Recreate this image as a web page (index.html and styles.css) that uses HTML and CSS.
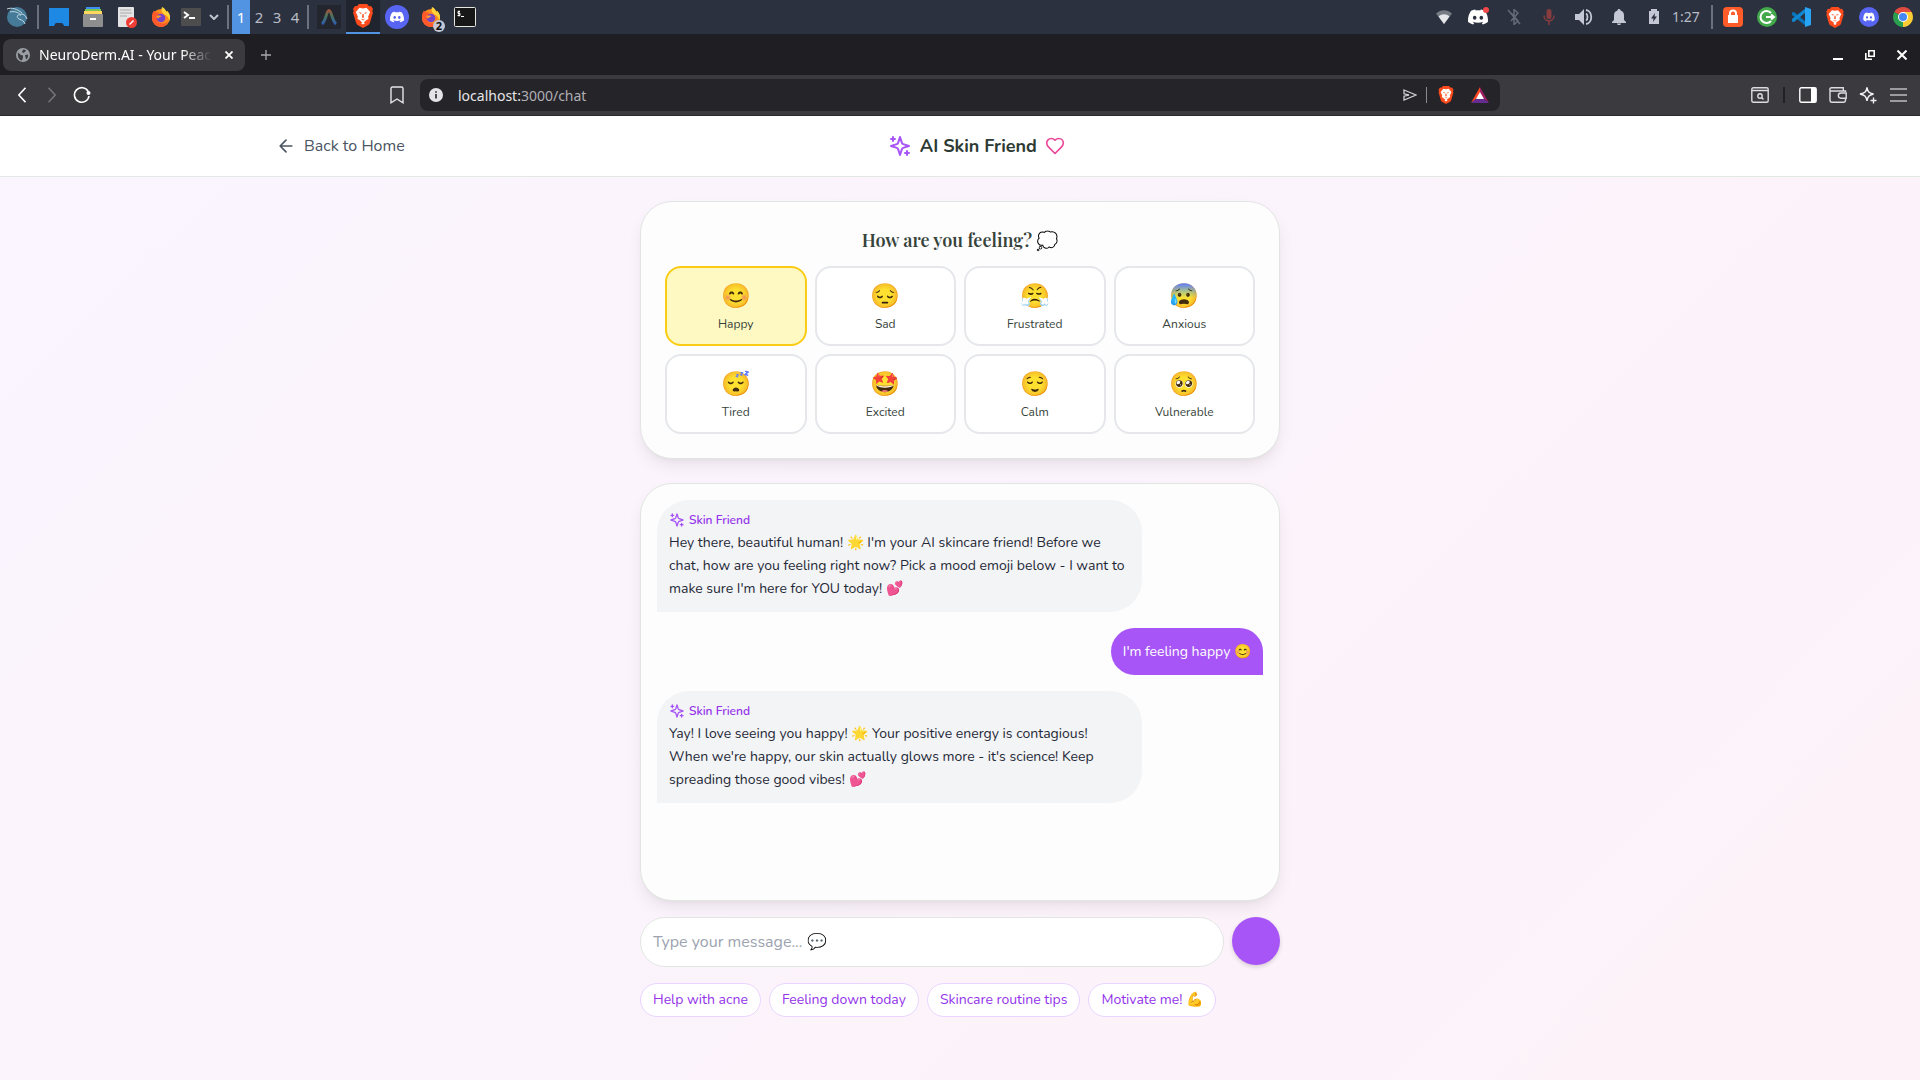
FILE: index.html
```
<!DOCTYPE html>
<html lang="en">
<head>
  <meta charset="UTF-8">
  <meta name="viewport" content="width=device-width, initial-scale=1.0">
  <title>NeuroDerm.AI</title>
  <link rel="stylesheet" href="styles.css">
</head>
<body>

  <!-- shared icons -->
  <svg class="sprite" aria-hidden="true">
    <symbol id="sparkles" viewBox="0 0 24 24">
      <path d="m12 3-1.912 5.813a2 2 0 0 1-1.275 1.275L3 12l5.813 1.912a2 2 0 0 1 1.275 1.275L12 21l1.912-5.813a2 2 0 0 1 1.275-1.275L21 12l-5.813-1.912a2 2 0 0 1-1.275-1.275L12 3Z M5 3v4 M19 17v4 M3 5h4 M17 19h4" fill="none" stroke="currentColor" stroke-width="2" stroke-linecap="round" stroke-linejoin="round"/>
    </symbol>
    <symbol id="discord" viewBox="0 0 24 24">
      <path fill="#fff" d="M20.317 4.37a19.79 19.79 0 0 0-4.885-1.515.074.074 0 0 0-.079.037c-.21.375-.444.865-.608 1.25-1.845-.277-3.68-.277-5.487 0-.164-.394-.406-.875-.618-1.25a.077.077 0 0 0-.078-.037A19.736 19.736 0 0 0 3.677 4.37a.07.07 0 0 0-.032.027C.533 9.046-.319 13.58.099 18.058a.082.082 0 0 0 .031.056c2.053 1.508 4.041 2.423 5.993 3.03a.078.078 0 0 0 .084-.028c.462-.63.873-1.295 1.226-1.994a.076.076 0 0 0-.042-.106 13 13 0 0 1-1.872-.892.077.077 0 0 1-.008-.128l.372-.291a.074.074 0 0 1 .078-.011c3.928 1.793 8.18 1.793 12.061 0a.074.074 0 0 1 .079.01c.12.099.246.198.373.292a.077.077 0 0 1-.007.128c-.6.35-1.22.645-1.873.891a.077.077 0 0 0-.041.107c.36.698.772 1.363 1.225 1.993a.076.076 0 0 0 .084.029c1.961-.607 3.95-1.522 6.002-3.03a.077.077 0 0 0 .032-.055c.5-5.177-.838-9.674-3.549-13.66a.061.061 0 0 0-.031-.029zM8.02 15.331c-1.183 0-2.157-1.086-2.157-2.419s.956-2.419 2.157-2.419c1.21 0 2.176 1.095 2.157 2.419 0 1.333-.956 2.419-2.157 2.419zm7.975 0c-1.183 0-2.157-1.086-2.157-2.419s.955-2.419 2.157-2.419c1.21 0 2.176 1.095 2.157 2.419 0 1.333-.946 2.419-2.157 2.419z"/>
    </symbol>
    <symbol id="discord-round" viewBox="0 0 24 24">
      <circle cx="12" cy="12" r="12" fill="#5865f2"/>
      <use href="#discord" x="5" y="5" width="14" height="14"/>
    </symbol>
    <symbol id="brave" viewBox="0 0 20 24">
      <path fill="#fb4a1b" d="M6 0h8l2.200 2.300L18 2l2 3-.7 1.900.6 1.900-2.900 9.700c-.4 1.300-1 2-2 2.700L10 24l-5-2.800c-1-.7-1.600-1.400-2-2.700L.1 8.800l.6-1.900L0 5l2-3 1.800.3z"/>
      <path fill="#fff" d="M6.500 3.800 10 4.400l3.500-.6 3.700 4.300-2.100 4.600.5 2.100-2.700 1.800-2.900 2.600-2.900-2.600-2.700-1.800.5-2.100-2.100-4.600z"/>
      <path fill="#fb4a1b" d="m5.500 8.200 3 .5-.5 1.300zM14.500 8.200l-3 .5.5 1.300zM9.400 10h1.200l.3 3.400-.9.700-.9-.7zM7.500 14.600l2.500 1 2.500-1L10 16.600z"/>
      <path fill="#fff" d="m8 19.200 2-1.200 2 1.200-2 1.400z"/>
    </symbol>
    <symbol id="firefox" viewBox="0 0 20 20">
      <circle cx="10" cy="11" r="9" fill="#ff8a1e"/>
      <path fill="#ff5a2c" d="M1.300 6.500 3 3.500l1.500 2 2.500-.3 2 3.500-3.300 3 2 4 5 .8 4.500-1.500C15.500 18.500 12.500 20 10 20c-5 0-9-4-9-9z"/>
      <path fill="#ffd43b" d="M11 0c3 1.300 4 3.500 4.200 5L16.500 4c2.500 2.700 3.300 6 1.900 10-.5-3-2.400-5.500-4.900-6.500C10.500 5.500 10 2.500 11 0z"/>
      <circle cx="10" cy="11" r="4.300" fill="#7542c9"/>
      <path fill="#ff9d27" d="M5 8.500c2 .6 3-.6 5.500.5-1 1.300-3 1-3.300 2.800-.8-.6-1.700-2-2.200-3.300z"/>
    </symbol>
  </svg>

  <!-- desktop panel -->
  <div class="panel">
    <div class="panel-group">
      <span class="slot"><svg width="24" height="24" viewBox="0 0 24 24"><circle cx="12" cy="12" r="10" fill="#457b98"/><path d="M2 4c5-2 10 0 15 4M5 7c4-1 8 0 11 3-4-1-5 2-2 4 3 1 5 2 6 5M16 9c3 0 5 2 6 5" fill="none" stroke="#c4dbe6" stroke-width="1"/></svg></span>
      <span class="sep"></span>
      <span class="slot"><svg width="20" height="18" viewBox="0 0 20 18"><path fill="#1e88e5" d="M0 0h20v18h-5l-2-3H7l-2 3H0z"/><path fill="#2a3140" d="m5 18 1.500-2.500h7L15 18z"/></svg></span>
      <span class="slot"><svg width="20" height="20" viewBox="0 0 20 20"><path fill="#3d8df5" d="M3 0h14v3H3z"/><path fill="#7ac74f" d="M2 2h16v3H2z"/><path fill="#ffd75e" d="M1 4h18v4H1z"/><rect y="7" width="20" height="13" rx="1" fill="#8e8e8e"/><rect x="7" y="11" width="6" height="2" fill="#fff"/></svg></span>
      <span class="slot"><svg width="20" height="21" viewBox="0 0 20 21"><rect x="1" width="16" height="20" rx="1" fill="#e4e4e4"/><path d="M3 3h11M3 6h12M3 9h7" stroke="#aaa"/><circle cx="14.500" cy="15.500" r="5.500" fill="#f03e36"/><path d="m12.500 17.500 4-4" stroke="#fff" stroke-width="1.500"/></svg></span>
      <span class="slot"><svg width="20" height="20"><use href="#firefox"/></svg></span>
      <span class="slot narrow"><svg width="20" height="18" viewBox="0 0 20 18"><rect width="20" height="18" rx="1" fill="#4d4d4d"/><path d="m3 4 4 3-4 3M8 10h6" fill="none" stroke="#fff" stroke-width="2"/></svg></span>
      <span class="slot chevron"><svg width="10" height="6" viewBox="0 0 10 6"><path d="m1 1 4 4 4-4" fill="none" stroke="#c0c4cc" stroke-width="2"/></svg></span>
      <span class="sep"></span>
      <button class="workspace current" type="button">1</button>
      <button class="workspace" type="button">2</button>
      <button class="workspace" type="button">3</button>
      <button class="workspace" type="button">4</button>
      <span class="sep"></span>
      <span class="slot"><svg width="24" height="24" viewBox="0 0 24 24"><defs><linearGradient id="arch" x2="0" y2="1"><stop offset="0" stop-color="#a0563f"/><stop offset=".4" stop-color="#4a7358"/><stop offset="1" stop-color="#2f5fb4"/></linearGradient></defs><rect width="24" height="24" fill="#23262f"/><path d="M5 19C9 16 9.500 5.500 12 5.500S15 16 19 19" fill="none" stroke="url(#arch)" stroke-width="3"/></svg></span>
      <span class="slot running"><svg width="20" height="24"><use href="#brave"/></svg></span>
      <span class="slot"><svg width="24" height="24"><use href="#discord-round"/></svg></span>
      <span class="slot badged"><svg width="20" height="20"><use href="#firefox"/></svg><b class="badge">2</b></span>
      <span class="slot"><svg width="22" height="20" viewBox="0 0 22 20"><rect x=".5" y=".5" width="21" height="19" rx="1" fill="#171717" stroke="#e8e6e0"/><path d="M6 4.500H4v2h2v2H3.500M5 3.500v6M7 9.500h3" fill="none" stroke="#fff"/></svg></span>
    </div>

    <div class="panel-group">
      <span class="slot tray"><svg width="16" height="14" viewBox="0 0 16 14"><path d="M0 3.500C5-1 11-1 16 3.500L8 14z" fill="#777b84"/><path d="M2.500 6.500C6 3.500 10 3.500 13.500 6.500L8 14z" fill="#e6e7ea"/></svg></span>
      <span class="slot tray"><svg width="22" height="20" viewBox="0 0 22 20"><use href="#discord" y="0" width="20" height="20"/><circle cx="18" cy="3" r="3" fill="#f04747"/></svg></span>
      <span class="slot tray"><svg width="14" height="16" viewBox="0 0 14 16"><path d="m4 4 7 8-4 3.500V.5L11 4l-7 8M1 1l12 14" fill="none" stroke="#666b77" stroke-width="1.500"/></svg></span>
      <span class="slot tray"><svg width="12" height="16" viewBox="0 0 12 16"><rect x="3.500" y="0" width="5" height="10" rx="2.500" fill="#873c40"/><path d="M1 6.500c0 7 10 7 10 0M6 12v4" fill="none" stroke="#873c40" stroke-width="1.500"/></svg></span>
      <span class="slot tray"><svg width="18" height="16" viewBox="0 0 18 16"><path d="M0 5h4l5-5v16l-5-5H0z" fill="#c3c8d4"/><path d="M11 4.500c2 1 2 6 0 7M11 1c7 1 7 13 0 14" fill="none" stroke="#c3c8d4" stroke-width="1.800"/></svg></span>
      <span class="slot tray"><svg width="14" height="16" viewBox="0 0 14 16"><path d="M7 0c1 0 1.500.6 1.500 1.500C11 2.200 12 4 12 6.500V11l2 2v1H0v-1l2-2V6.500C2 4 3 2.200 5.500 1.500 5.500.6 6 0 7 0zM5 14.500h4C9 15.500 8 16 7 16s-2-.5-2-1.500z" fill="#c3c8d4"/></svg></span>
      <span class="slot tray"><svg width="12" height="16" viewBox="0 0 12 16"><path d="M3 2V0h6v2h2v13H1V2z" fill="#c3c8d4"/><path d="M7 4 3 9.500h2.500L5 13l4-5.500H6.500z" fill="#2b313f"/></svg></span>
      <span class="clock">1:27</span>
      <span class="sep"></span>
      <span class="slot"><svg width="20" height="20" viewBox="0 0 20 20"><rect width="20" height="20" rx="4" fill="#ff5c29"/><rect x="5" y="8" width="10" height="8" fill="#fff"/><path d="M7 8V6.500a3 3 0 0 1 6 0V8" fill="none" stroke="#fff" stroke-width="2"/></svg></span>
      <span class="slot"><svg width="20" height="20" viewBox="0 0 20 20"><circle cx="10" cy="10" r="10" fill="#43a94b"/><path d="M14 6a6 6 0 1 0 0 8M9 10h8M14 7.500l3 2.500-3 2.500" fill="none" stroke="#fff" stroke-width="2"/></svg></span>
      <span class="slot"><svg width="20" height="20" viewBox="0 0 20 20"><path d="M1 5.500 3 5l12 10v4L1 8z" fill="#0a74bd"/><path d="M1 14.500 3 15 15 5V1L1 12z" fill="#1087d2"/><path d="m14 0 6 2v16l-6 2z" fill="#27a5f4"/></svg></span>
      <span class="slot"><svg width="18" height="21"><use href="#brave"/></svg></span>
      <span class="slot"><svg width="20" height="20"><use href="#discord-round"/></svg></span>
      <span class="slot"><svg width="20" height="20" viewBox="0 0 20 20"><path d="M10 10 1.340 5A10 10 0 0 1 18.660 5z" fill="#e04a3f"/><path d="M10 10 18.660 5A10 10 0 0 1 10 20z" fill="#fccc35"/><path d="M10 10v10A10 10 0 0 1 1.340 5z" fill="#2a9f50"/><path d="M10 5h8.660L14 12z" fill="#fccc35"/><circle cx="10" cy="10" r="5" fill="#fff"/><circle cx="10" cy="10" r="4" fill="#4587f3"/></svg></span>
    </div>
  </div>

  <!-- browser tabs -->
  <div class="tabstrip">
    <div class="tab">
      <svg width="14" height="14" viewBox="0 0 14 14"><circle cx="7" cy="7" r="7" fill="#9aa0a6"/><path d="M2 4.500 5 7l2 .5v2L6 12.500C3 12 1.300 9 2 4.500zM7 1.500l3 .5-1 2-2 1-1-1zM9 7l3-.5c.5 2-.5 4-2 5z" fill="#3c3b40"/></svg>
      <span class="tab-title">NeuroDerm.AI - Your Peac</span>
      <button class="tab-close" type="button" aria-label="Close tab"><svg width="8" height="8" viewBox="0 0 8 8"><path d="m.5.5 7 7M7.500.5l-7 7" stroke="#fff" stroke-width="1.800"/></svg></button>
    </div>
    <button class="new-tab" type="button" aria-label="New tab"><svg width="10" height="10" viewBox="0 0 10 10"><path d="M5 0v10M0 5h10" stroke="#a9a9ac" stroke-width="1.300"/></svg></button>
    <div class="window-controls">
      <button type="button" aria-label="Minimize"><svg width="10" height="10" viewBox="0 0 10 10"><path d="M0 9h10" stroke="#fff" stroke-width="2"/></svg></button>
      <button type="button" aria-label="Restore"><svg width="10" height="10" viewBox="0 0 10 10"><path d="M3.800.8h5.400v5.400H3.800zM.8 3v6.200H7" fill="none" stroke="#fff" stroke-width="1.600"/></svg></button>
      <button type="button" aria-label="Close"><svg width="10" height="10" viewBox="0 0 10 10"><path d="m.5.5 9 9M9.500.5l-9 9" stroke="#fff" stroke-width="2"/></svg></button>
    </div>
  </div>

  <!-- browser toolbar -->
  <div class="toolbar">
    <div class="tools">
      <button type="button" aria-label="Back"><svg width="8" height="16" viewBox="0 0 8 16"><path d="M7.500.8.800 8l6.700 7.200" fill="none" stroke="#fff" stroke-width="1.600"/></svg></button>
      <button type="button" aria-label="Forward"><svg width="8" height="16" viewBox="0 0 8 16"><path d="M.5.8 7.200 8 .5 15.200" fill="none" stroke="#77767b" stroke-width="1.500"/></svg></button>
      <button type="button" aria-label="Reload"><svg width="18" height="18" viewBox="0 0 18 18"><path d="M15.200 5.500A7.300 7.300 0 1 0 16 10" fill="none" stroke="#fff" stroke-width="1.600"/><circle cx="15.500" cy="7" r="2" fill="#fff"/></svg></button>
      <button class="bookmark" type="button" aria-label="Bookmark"><svg width="14" height="18" viewBox="0 0 14 18"><path d="M1 2.500C1 1.500 1.500 1 2.500 1h9c1 0 1.500.5 1.500 1.500v14.300L7 13l-6 3.800z" fill="none" stroke="#e6e6e8" stroke-width="1.400"/></svg></button>
    </div>
    <div class="address">
      <svg width="14" height="14" viewBox="0 0 14 14"><circle cx="7" cy="7" r="7" fill="#e4e3e8"/><path d="M7 6v4.500M7 3.200v1.600" stroke="#252429" stroke-width="1.600"/></svg>
      <span class="url">localhost:<span class="path">3000/chat</span></span>
      <svg width="14" height="12" viewBox="0 0 14 12"><path d="m1 1 12 5-12 5V7.200L6 6 1 4.800z" fill="none" stroke="#cfced3" stroke-width="1.300"/></svg>
      <span class="address-sep"></span>
      <svg width="16" height="18"><use href="#brave"/></svg>
      <svg class="bat" width="18" height="16" viewBox="0 0 18 16"><path d="M9 0v6l-3 5-6 5z" fill="#ff4724"/><path d="M9 0l9 16-6-5-3-5z" fill="#9e1f63"/><path d="m0 16 6-5h6l6 5z" fill="#662d91"/><path d="m9 5 4 7H5z" fill="#fff"/></svg>
    </div>
    <div class="tools end">
      <button type="button" aria-label="Search tabs"><svg width="18" height="16" viewBox="0 0 18 16"><rect x=".8" y=".8" width="16.400" height="14.400" rx="1.500" fill="none" stroke="#dddce0" stroke-width="1.400"/><path d="M1 3.500h16M10.500 10.500l2 2" stroke="#dddce0" stroke-width="1.400"/><circle cx="9" cy="9" r="2.200" fill="none" stroke="#dddce0" stroke-width="1.400"/></svg></button>
      <span class="tool-sep"></span>
      <button type="button" aria-label="Sidebar"><svg width="18" height="16" viewBox="0 0 18 16"><rect x=".8" y=".8" width="16.400" height="14.400" rx="1.500" fill="none" stroke="#fff" stroke-width="1.400"/><path d="M12 1h5v14h-5z" fill="#fff"/></svg></button>
      <button type="button" aria-label="Wallet"><svg width="18" height="16" viewBox="0 0 18 16"><path d="M16.500 5V4H2.500C.3 4 .3.800 2.500.800h11.800V4M1 2.500V13c0 1.500.5 2.200 2 2.200h11.500c1.500 0 2-.7 2-2.200v-1M17.200 6H12c-3.500 0-3.500 5.200 0 5.200h5.200z" fill="none" stroke="#dddce0" stroke-width="1.400"/></svg></button>
      <button type="button" aria-label="Leo AI"><svg width="18" height="18" viewBox="0 0 18 18"><path d="M8 1.500c.8 4.300 1.800 5.300 6.500 6.500C9.800 9.200 8.800 10.200 8 15 7.200 10.200 6.200 9.200 1 8c5.200-1.200 6.200-2.200 7-6.500zM14.500 11.500v6M11.500 14.500h6" fill="none" stroke="#f0f0f2" stroke-width="1.400"/></svg></button>
      <button type="button" aria-label="Menu"><svg width="17" height="14" viewBox="0 0 17 14"><path d="M0 1h17M0 7h17M0 13h17" stroke="#bdbcc1" stroke-width="1.600"/></svg></button>
    </div>
  </div>

  <!-- the app -->
  <div class="app">
    <header class="app-header">
      <div class="header-inner">
        <a class="back" href="#">
          <svg width="20" height="20" viewBox="0 0 24 24"><path d="m12 19-7-7 7-7M19 12H5" fill="none" stroke="currentColor" stroke-width="2" stroke-linecap="round" stroke-linejoin="round"/></svg>
          Back to Home
        </a>
        <div class="brand">
          <svg class="brand-icon" width="24" height="24"><use href="#sparkles"/></svg>
          <h1>AI Skin Friend</h1>
          <svg class="heart" width="20" height="20" viewBox="0 0 24 24"><path d="M19 14c1.490-1.460 3-3.210 3-5.500A5.500 5.500 0 0 0 16.500 3c-1.760 0-3 .5-4.500 2-1.500-1.500-2.740-2-4.500-2A5.500 5.500 0 0 0 2 8.500c0 2.300 1.500 4.050 3 5.500l7 7Z" fill="none" stroke="currentColor" stroke-width="2" stroke-linecap="round" stroke-linejoin="round"/></svg>
        </div>
        <div class="header-spacer"></div>
      </div>
    </header>

    <main class="content">
      <section class="card mood-card">
        <h2>How are you feeling? 💭</h2>
        <div class="mood-grid">
          <button class="mood selected" type="button"><span class="emoji">😊</span><span class="mood-name">Happy</span></button>
          <button class="mood" type="button"><span class="emoji">😔</span><span class="mood-name">Sad</span></button>
          <button class="mood" type="button"><span class="emoji">😤</span><span class="mood-name">Frustrated</span></button>
          <button class="mood" type="button"><span class="emoji">😰</span><span class="mood-name">Anxious</span></button>
          <button class="mood" type="button"><span class="emoji">😴</span><span class="mood-name">Tired</span></button>
          <button class="mood" type="button"><span class="emoji">🤩</span><span class="mood-name">Excited</span></button>
          <button class="mood" type="button"><span class="emoji">😌</span><span class="mood-name">Calm</span></button>
          <button class="mood" type="button"><span class="emoji">🥺</span><span class="mood-name">Vulnerable</span></button>
        </div>
      </section>

      <section class="card chat-card">
        <div class="bubble">
          <div class="sender"><svg width="16" height="16"><use href="#sparkles"/></svg>Skin Friend</div>
          <p>Hey there, beautiful human! 🌟 I'm your AI skincare friend! Before we chat, how are you feeling right now? Pick a mood emoji below - I want to make sure I'm here for YOU today! 💕</p>
        </div>
        <div class="bubble mine">
          <p>I'm feeling happy 😊</p>
        </div>
        <div class="bubble">
          <div class="sender"><svg width="16" height="16"><use href="#sparkles"/></svg>Skin Friend</div>
          <p>Yay! I love seeing you happy! 🌟 Your positive energy is contagious! When we're happy, our skin actually glows more - it's science! Keep spreading those good vibes! 💕</p>
        </div>
      </section>

      <form class="composer">
        <input type="text" aria-label="Message" placeholder="Type your message... 💬">
        <button class="send" type="submit" aria-label="Send"></button>
      </form>

      <div class="suggestions">
        <button type="button">Help with acne</button>
        <button type="button">Feeling down today</button>
        <button type="button">Skincare routine tips</button>
        <button type="button">Motivate me! 💪</button>
      </div>
    </main>
  </div>

</body>
</html>
```
FILE: styles.css
```
* {
  box-sizing: border-box;
}

body {
  margin: 0;
  min-height: 100vh;
  display: flex;
  flex-direction: column;
  font-family: Nunito, "Noto Sans", sans-serif;
  color: #1f2937;
}

button {
  border: 0;
  padding: 0;
  background: none;
  font-family: inherit;
  cursor: pointer;
}

svg {
  display: block;
  flex: none;
}

.sprite {
  position: absolute;
  width: 0;
  height: 0;
}

/* desktop panel */
.panel {
  display: flex;
  justify-content: space-between;
  height: 34px;
  background: #2b313f;
  font-family: "Noto Sans", sans-serif;
}

.panel-group {
  display: flex;
}

.slot {
  width: 34px;
  display: flex;
  align-items: center;
  justify-content: center;
}

.slot.narrow {
  width: 26px;
}

.slot.chevron {
  width: 20px;
}

.slot.tray {
  width: 35px;
}

.slot.running {
  background: #20242f;
  border-bottom: 2px solid #5294e2;
}

.slot.badged {
  position: relative;
}

.badge {
  position: absolute;
  right: 3px;
  bottom: 2px;
  width: 12px;
  height: 12px;
  border-radius: 50%;
  background: #c3c8d4;
  color: #111;
  font-size: 11px;
  line-height: 12px;
  text-align: center;
}

.sep {
  width: 2px;
  margin: 5px 3px;
  background: #6c717d;
}

.workspace {
  width: 18px;
  color: #b8bcc6;
  font-size: 15px;
}

.workspace.current {
  background: #5294e2;
  color: #fff;
}

.clock {
  width: 37px;
  padding-left: 1px;
  color: #b8bcc6;
  font-size: 14px;
  line-height: 34px;
}

/* browser */
.tabstrip {
  display: flex;
  align-items: center;
  height: 41px;
  padding: 0 2px 0 3px;
  background: #1f1e23;
  font-family: "Noto Sans", sans-serif;
}

.tab {
  display: flex;
  align-items: center;
  width: 242px;
  height: 32px;
  padding: 0 8px 0 13px;
  border-radius: 8px;
  background: #3b3a3f;
}

.tab-title {
  flex: 1;
  margin: 0 4px 0 9px;
  white-space: nowrap;
  font-size: 14px;
  color: #fff;
  -webkit-mask-image: linear-gradient(to right, #000 80%, transparent 97%);
  mask-image: linear-gradient(to right, #000 80%, transparent 97%);
}

.tab-close {
  width: 16px;
  height: 16px;
  display: flex;
  align-items: center;
  justify-content: center;
}

.new-tab {
  width: 42px;
  height: 32px;
  display: flex;
  align-items: center;
  justify-content: center;
}

.window-controls {
  display: flex;
  margin-left: auto;
}

.window-controls button {
  width: 32px;
  height: 32px;
  display: flex;
  align-items: center;
  justify-content: center;
}

.toolbar {
  display: grid;
  grid-template-columns: 420px 1fr 420px;
  align-items: center;
  height: 41px;
  border-bottom: 1px solid #2a292e;
  background: #3b3a3f;
}

.tools {
  display: flex;
  align-items: center;
  padding: 0 8px 0 7px;
}

.tools.end {
  justify-content: flex-end;
  padding-right: 7px;
}

.tools button {
  width: 30px;
  height: 32px;
  display: flex;
  align-items: center;
  justify-content: center;
}

.tools .bookmark {
  margin-left: auto;
}

.tool-sep {
  width: 2px;
  height: 16px;
  margin: 0 8px;
  background: #222126;
}

.address {
  display: flex;
  align-items: center;
  height: 32px;
  padding: 0 11px 0 9px;
  border-radius: 8px;
  background: #252429;
}

.url {
  flex: 1;
  margin-left: 15px;
  font-family: "Noto Sans", sans-serif;
  font-size: 14px;
  color: #e6e6e8;
}

.url .path {
  color: #b0afb4;
}

.address-sep {
  width: 1px;
  height: 16px;
  margin: 0 11px 0 9px;
  background: #8b8a8f;
}

.bat {
  margin-left: 17px;
}

/* app */
.app {
  flex: 1;
  background: linear-gradient(135deg, #faf5ff, #fdf2f8);
}

.app-header {
  border-bottom: 1px solid #e2e8e2;
  background: #fff;
}

.header-inner {
  display: flex;
  align-items: center;
  justify-content: space-between;
  max-width: 1400px;
  height: 60px;
  margin: 0 auto;
  padding: 0 16px;
}

.back {
  display: flex;
  align-items: center;
  gap: 8px;
  color: #4b5563;
  font-size: 16px;
  text-decoration: none;
}

.brand {
  display: flex;
  align-items: center;
  gap: 8px;
}

.brand h1 {
  margin: 0;
  font-size: 18px;
  font-weight: 700;
  color: #2d3a33;
}

.brand-icon {
  color: #a855f7;
}

.heart {
  color: #ec4899;
}

.header-spacer {
  width: 96px;
}

.content {
  max-width: 672px;
  margin: 0 auto;
  padding: 24px 16px 62px;
}

.card {
  border: 1px solid #e2e6e2;
  border-radius: 32px;
  background: #fdfdfd;
  box-shadow: 0 8px 16px -2px rgba(0, 0, 0, 0.08), 0 4px 6px -4px rgba(0, 0, 0, 0.05);
}

.mood-card {
  padding: 24px;
}

.mood-card h2 {
  margin: 0 0 12px;
  font-family: "Playfair Display", "Liberation Serif", serif;
  font-size: 18px;
  font-weight: 600;
  line-height: 28px;
  text-align: center;
  color: #36433a;
}

.mood-grid {
  display: grid;
  grid-template-columns: repeat(4, 1fr);
  gap: 8px;
}

.mood {
  display: flex;
  flex-direction: column;
  align-items: center;
  gap: 4px;
  padding: 12px;
  border: 2px solid #e5e7eb;
  border-radius: 16px;
  background: #fff;
  color: #36433a;
}

.mood.selected {
  border-color: #facc15;
  background: #fef9c3;
}

.emoji {
  font-size: 24px;
  line-height: 32px;
}

.mood-name {
  font-size: 12px;
  line-height: 16px;
}

.chat-card {
  display: flex;
  flex-direction: column;
  align-items: flex-start;
  gap: 16px;
  min-height: 418px;
  margin-top: 24px;
  padding: 16px;
}

.bubble {
  max-width: 80%;
  padding: 12px;
  border-radius: 32px 32px 32px 0;
  background: #f3f4f6;
}

.bubble p {
  margin: 0;
  font-size: 14px;
  line-height: 23px;
}

.bubble.mine {
  align-self: flex-end;
  border-radius: 32px 32px 0 32px;
  background: #a855f7;
  color: #fff;
}

.sender {
  display: flex;
  align-items: center;
  gap: 4px;
  margin-bottom: 3px;
  font-size: 12px;
  font-weight: 600;
  line-height: 16px;
  color: #9333ea;
}

.sender svg {
  color: #a855f7;
}

.composer {
  display: flex;
  gap: 8px;
  margin-top: 16px;
}

.composer input {
  flex: 1;
  height: 50px;
  padding: 0 12px;
  border: 1px solid #e2e6e2;
  border-radius: 25px;
  background: #fff;
  font-family: inherit;
  font-size: 16px;
  color: #1f2937;
}

.composer input::placeholder {
  color: #9ca3af;
}

.send {
  width: 48px;
  height: 48px;
  border-radius: 50%;
  background: #a855f7;
  box-shadow: 0 2px 4px rgba(0, 0, 0, 0.15);
}

.suggestions {
  display: flex;
  flex-wrap: wrap;
  gap: 8px;
  margin-top: 16px;
}

.suggestions button {
  padding: 6px 12px;
  border: 1px solid #e9d5ff;
  border-radius: 17px;
  background: #fff;
  color: #9333ea;
  font-size: 14px;
  line-height: 20px;
}
```
